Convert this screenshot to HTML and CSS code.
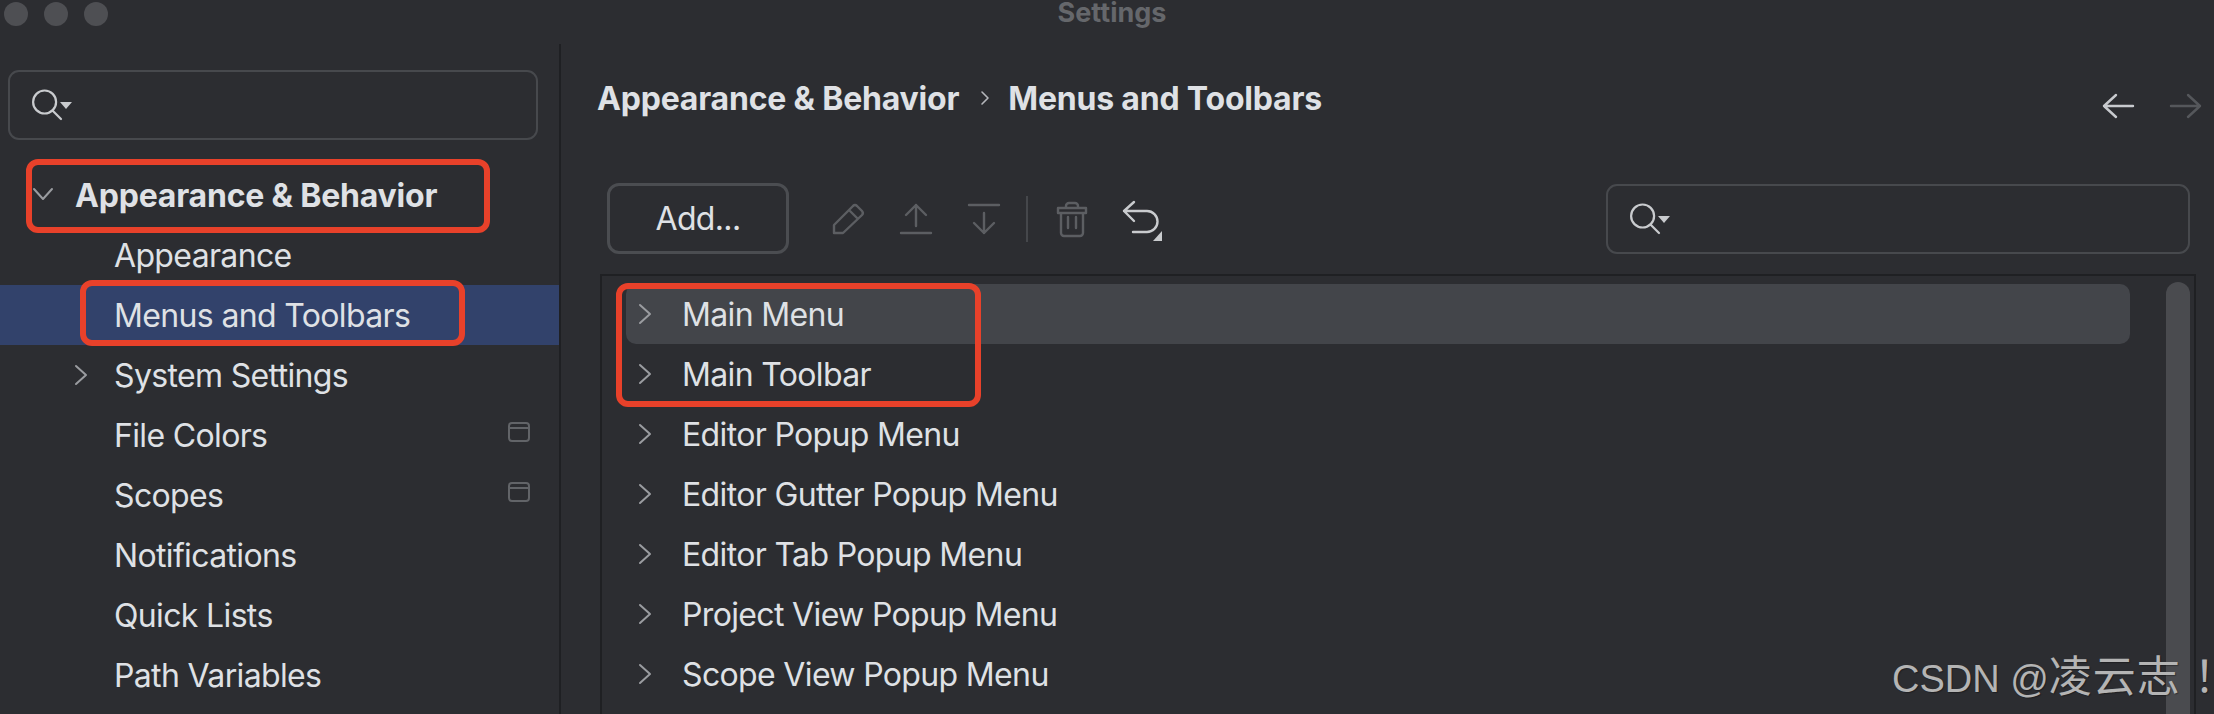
FILE: index.html
```html
<!DOCTYPE html>
<html lang="en">
<head>
  <meta charset="UTF-8" />
  <title>Settings</title>
  <link rel="stylesheet" href="styles.css">
</head>
<body>
  <div class="app">
    <header class="titlebar">
      <div class="lights"><span></span><span></span><span></span></div>
      <div class="title">Settings</div>
    </header>

    <div class="content">
      <aside class="sidebar">
        <div class="search side-search">
          <svg class="search-icon" viewBox="0 0 46 40"><circle cx="16.6" cy="17" r="11.5"/><path d="M24.5 25.5L33 34"/><path class="fill" d="M32 17h12l-6 7z"/></svg>
        </div>
        <ul class="tree">
          <li class="row group"><svg class="chev-down" viewBox="0 0 20 12"><path d="M1 1l9 10 9-10"/></svg>Appearance &amp; Behavior</li>
          <li class="row sub"><span class="slot"></span>Appearance</li>
          <li class="row sub selected"><span class="slot"></span>Menus and Toolbars</li>
          <li class="row sub"><span class="slot"><svg class="chev" viewBox="0 0 12 20"><path d="M1 1l10 9-10 9"/></svg></span>System Settings</li>
          <li class="row sub"><span class="slot"></span>File Colors<svg class="scope" viewBox="0 0 22 20"><rect x="1" y="1" width="20" height="18" rx="3"/><path d="M1 6h20"/></svg></li>
          <li class="row sub"><span class="slot"></span>Scopes<svg class="scope" viewBox="0 0 22 20"><rect x="1" y="1" width="20" height="18" rx="3"/><path d="M1 6h20"/></svg></li>
          <li class="row sub"><span class="slot"></span>Notifications</li>
          <li class="row sub"><span class="slot"></span>Quick Lists</li>
          <li class="row sub"><span class="slot"></span>Path Variables</li>
        </ul>
      </aside>

      <main class="main">
        <div class="head">
          <div class="crumbs">
            <span>Appearance &amp; Behavior</span>
            <svg class="crumb-sep" viewBox="0 0 8 14"><path d="M1 1l6 6-6 6"/></svg>
            <span>Menus and Toolbars</span>
          </div>
          <div class="nav">
            <svg class="nav-back" viewBox="0 0 32 32"><path d="M31 16H2M14 5L2 16l12 11"/></svg>
            <svg class="nav-next" viewBox="0 0 32 32"><path d="M1 16h29M18 5l12 11-12 11"/></svg>
          </div>
        </div>

        <div class="toolbar">
          <button class="add">Add...</button>
          <svg class="tool first" viewBox="0 0 40 40"><path d="M6 34v-8L25 7a3 3 0 0 1 4 0l5 5a3 3 0 0 1 0 4L15 34zM21 11l8 8"/></svg>
          <svg class="tool" viewBox="0 0 40 40"><path d="M5 34h30M20 6v21M10 16L20 6l10 10"/></svg>
          <svg class="tool" viewBox="0 0 40 40"><path d="M5 6h30M20 14v20M10 24l10 10 10-10"/></svg>
          <span class="tool-sep"></span>
          <svg class="tool trash" viewBox="0 0 40 40"><path d="M14 9V7a3 3 0 0 1 3-3h6a3 3 0 0 1 3 3v2M6 9h28v5H6zM9 14v20a3 3 0 0 0 3 3h16a3 3 0 0 0 3-3V14M16 18v11M24 18v11"/></svg>
          <svg class="tool undo" viewBox="0 0 40 40"><path d="M13 3L3 12l10 10M3 12h23a10.500 10.500 0 0 1 0 21H12"/><path class="fill" d="M32 42l9-10v10z"/></svg>
          <div class="search main-search">
            <svg class="search-icon" viewBox="0 0 46 40"><circle cx="16.6" cy="17" r="11.500"/><path d="M24.500 25.500L33 34"/><path class="fill" d="M32 17h12l-6 7z"/></svg>
          </div>
        </div>

        <div class="panel">
          <ul class="list">
            <li class="item hover"><svg class="chev" viewBox="0 0 12 20"><path d="M1 1l10 9-10 9"/></svg>Main Menu</li>
            <li class="item"><svg class="chev" viewBox="0 0 12 20"><path d="M1 1l10 9-10 9"/></svg>Main Toolbar</li>
            <li class="item"><svg class="chev" viewBox="0 0 12 20"><path d="M1 1l10 9-10 9"/></svg>Editor Popup Menu</li>
            <li class="item"><svg class="chev" viewBox="0 0 12 20"><path d="M1 1l10 9-10 9"/></svg>Editor Gutter Popup Menu</li>
            <li class="item"><svg class="chev" viewBox="0 0 12 20"><path d="M1 1l10 9-10 9"/></svg>Editor Tab Popup Menu</li>
            <li class="item"><svg class="chev" viewBox="0 0 12 20"><path d="M1 1l10 9-10 9"/></svg>Project View Popup Menu</li>
            <li class="item"><svg class="chev" viewBox="0 0 12 20"><path d="M1 1l10 9-10 9"/></svg>Scope View Popup Menu</li>
          </ul>
          <div class="scrollbar"></div>
        </div>
      </main>
    </div>

    <!-- annotations over the screenshot -->
    <div class="mark mark-group"></div>
    <div class="mark mark-selected"></div>
    <div class="mark mark-items"></div>
    <div class="watermark">CSDN @<span class="wm-cjk">凌云志 <span class="wm-end">！</span></span></div>
  </div>
</body>
</html>
```

FILE: styles.css
```css
* {
  box-sizing: border-box;
}
body {
  margin: 0;
  background: #2c2d31;
  color: #dfe1e5;
  font-family: 'Inter', 'Noto Sans', sans-serif;
  font-size: 32px;
  letter-spacing: -0.65px;
  overflow: hidden;
}
ul {
  list-style: none;
  margin: 0;
  padding: 0;
}
svg {
  display: block;
  flex: none;
  overflow: visible;
  fill: none;
  stroke-linecap: round;
  stroke-linejoin: round;
}
.app {
  position: relative;
  width: 2214px;
  height: 714px;
  overflow: hidden;
}

/* Title bar */
.titlebar {
  display: grid;
  grid-template-columns: 1fr auto 1fr;
  height: 44px;
  padding-left: 10px;
}
.lights {
  display: flex;
  gap: 16px;
  margin: 2px 0 0 -6px;
}
.lights span {
  width: 24px;
  height: 24px;
  border-radius: 50%;
  background: #4e4f53;
}
.title {
  grid-column: 2;
  color: #65676b;
  font-size: 27px;
  font-weight: 700;
  letter-spacing: 0;
  line-height: 30px;
  margin-top: -2px;
}

.content {
  display: flex;
  height: 670px;
}

/* Sidebar */
.sidebar {
  width: 561px;
  flex: none;
  border-right: 2px solid #1f2023;
}
.search {
  display: flex;
  align-items: center;
  border: 2px solid #47494d;
  border-radius: 11px;
  padding-left: 18px;
}
.search-icon {
  width: 46px;
  height: 40px;
  stroke: #c9cbce;
  stroke-width: 2.2;
}
.fill {
  fill: #c9cbce;
  stroke: none;
}
.side-search {
  width: 530px;
  height: 70px;
  margin: 26px 0 25px 8px;
}
.row {
  display: flex;
  align-items: center;
  height: 60px;
  white-space: nowrap;
}
.group {
  padding-left: 33px;
  font-weight: 700;
  letter-spacing: -0.2px;
}
.chev-down {
  width: 20px;
  height: 12px;
  margin: -2px 22px 0 0;
  stroke: #9a9ca0;
  stroke-width: 2;
}
.chev {
  width: 12px;
  height: 20px;
  stroke: #9a9ca0;
  stroke-width: 2;
}
.sub {
  padding-left: 75px;
}
.slot {
  width: 39px;
  flex: none;
}
.selected {
  background: #32426b;
}
.scope {
  width: 22px;
  height: 20px;
  margin: 0 29px 6px auto;
  stroke: #626468;
  stroke-width: 2;
}

/* Right side */
.main {
  flex: 1;
  min-width: 0;
  display: flex;
  flex-direction: column;
}
.head {
  display: flex;
  justify-content: space-between;
  height: 139px;
  padding: 0 12px 0 36px;
}
.crumbs {
  display: flex;
  align-items: center;
  height: 38px;
  margin-top: 35px;
  font-weight: 700;
  letter-spacing: -0.2px;
  white-space: nowrap;
}
.crumb-sep {
  width: 8px;
  height: 14px;
  margin: 0 19px 0 22px;
  stroke: #b5b7bb;
  stroke-width: 1.6;
}
.nav {
  display: flex;
  gap: 36px;
  margin-top: 46px;
}
.nav svg {
  width: 32px;
  height: 32px;
  stroke-width: 2.4;
}
.nav-back {
  stroke: #c8cace;
}
.nav-next {
  stroke: #55575b;
}

.toolbar {
  display: flex;
  align-items: center;
  height: 71px;
  margin-bottom: 20px;
  padding: 0 24px 0 46px;
}
.add {
  width: 182px;
  height: 71px;
  border: 3px solid #4b4d51;
  border-radius: 12px;
  background: none;
  color: #dfe1e5;
  font: inherit;
  letter-spacing: -0.65px;
}
.tool {
  width: 40px;
  height: 40px;
  margin-left: 28px;
  stroke: #5c5e62;
  stroke-width: 2.4;
}
.tool.first {
  margin-left: 39px;
}
.tool-sep {
  width: 2px;
  height: 46px;
  margin-left: 22px;
  background: #45474b;
}
.tool.trash {
  margin-left: 24px;
}
.tool.undo {
  margin-left: 29px;
  stroke: #c9cbce;
}
.main-search {
  width: 584px;
  height: 70px;
  margin-left: auto;
}

.panel {
  flex: 1;
  display: flex;
  margin: 0 18px 0 39px;
  border: 2px solid #1f2023;
  border-bottom: 0;
}
.list {
  flex: 1;
  padding: 8px 0 0 24px;
}
.item {
  display: flex;
  align-items: center;
  height: 60px;
  padding-left: 13px;
  border-radius: 10px;
  white-space: nowrap;
}
.item .chev {
  margin-right: 31px;
}
.hover {
  background: #43454a;
}
.scrollbar {
  width: 24px;
  margin: 6px 4px 0 36px;
  border-radius: 12px 12px 0 0;
  background: #4a4b4f;
}

/* Red annotation boxes */
.mark {
  position: absolute;
  border: 6px solid #e8412a;
  border-radius: 12px;
}
.mark-group {
  left: 26px;
  top: 159px;
  width: 464px;
  height: 74px;
}
.mark-selected {
  left: 80px;
  top: 280px;
  width: 385px;
  height: 66px;
}
.mark-items {
  left: 616px;
  top: 283px;
  width: 365px;
  height: 124px;
}
.watermark {
  position: absolute;
  left: 1892px;
  top: 655px;
  color: #b4b4b4;
  font-family: 'Liberation Sans', 'Noto Sans CJK SC', sans-serif;
  font-size: 38px;
  letter-spacing: 0;
  line-height: 44px;
  white-space: nowrap;
  text-shadow: 1px 1px 1px rgba(0, 0, 0, 0.3);
}
.wm-cjk {
  font-size: 43px;
  letter-spacing: 1px;
}
.wm-end {
  letter-spacing: -30px;
}
```
